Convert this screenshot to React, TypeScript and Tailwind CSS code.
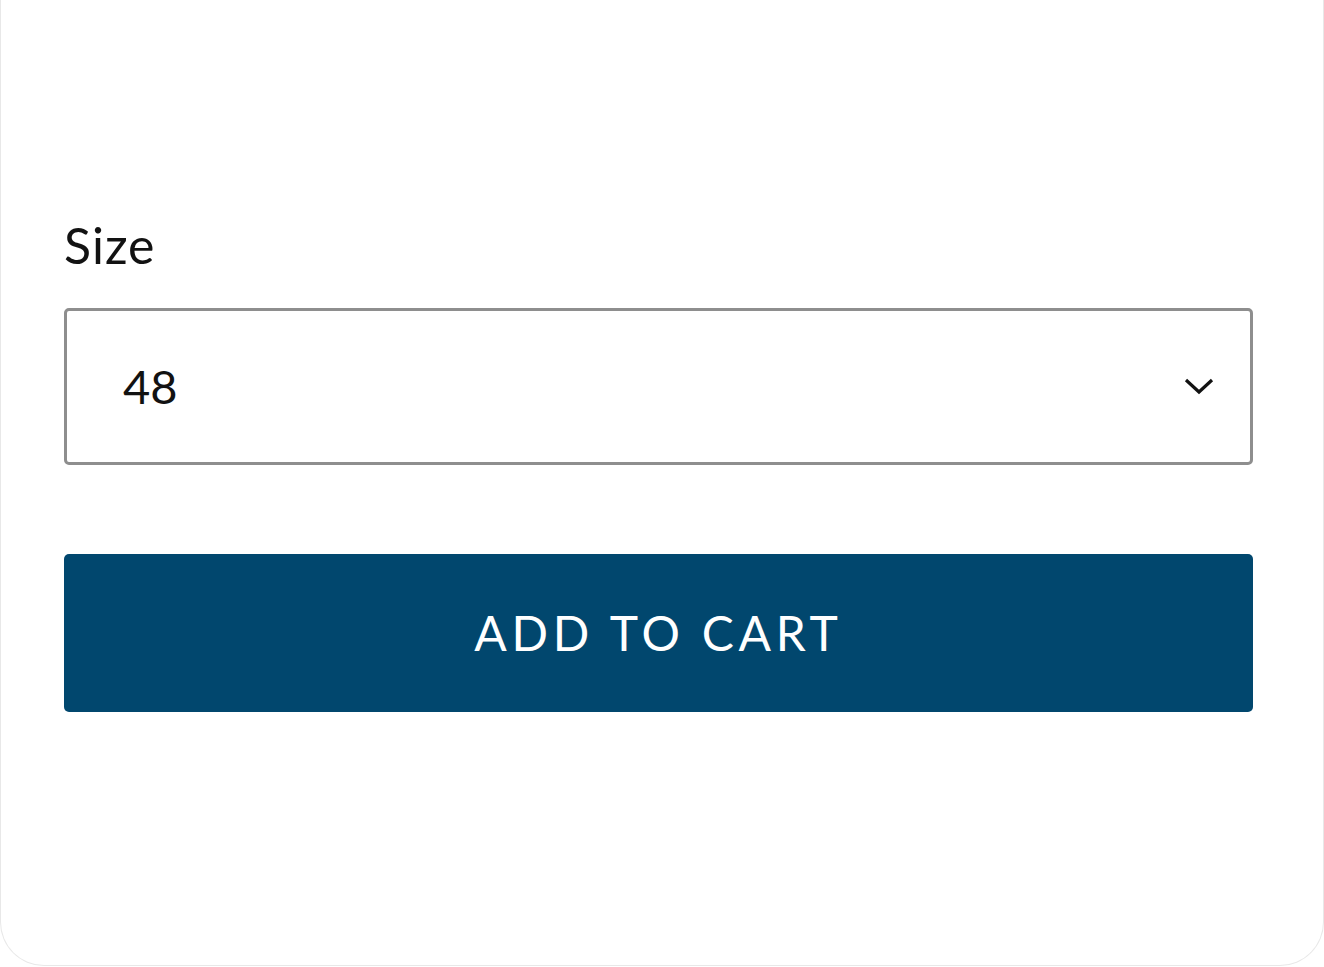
import * as React from 'react';

function Chevron() {
    return (
        <svg width="32" height="22" viewBox="0 0 32 22" fill="none" aria-hidden="true">
            <path d="M3 5 L16 17 L29 5" stroke="#121212" strokeWidth="3.2" />
        </svg>
    );
}

export default function App() {
    const [size, setSize] = React.useState('48');

    return (
        <div className="h-[967px] w-[1324px] bg-white font-['Lato',sans-serif] text-[#121212]">
            <div className="h-[966px] w-full rounded-b-[44px] border-x border-b border-[#e8e8e8] px-[63px] pt-[220px]">
                <label className="block text-[50px] leading-[50px] tracking-[0.02em]" htmlFor="size">
                    Size
                </label>

                <div className="relative mt-[38px] w-[1189px]">
                    <select
                        id="size"
                        value={size}
                        onChange={(e) => setSize(e.target.value)}
                        className="h-[157px] w-full appearance-none rounded-[5px] border-[3px] border-[#8e8e8e] bg-white pl-[56px] text-[47px] outline-none"
                    >
                        {['44', '46', '48', '50', '52', '54'].map((s) => (
                            <option key={s} value={s}>
                                {s}
                            </option>
                        ))}
                    </select>
                    <span className="pointer-events-none absolute right-[38px] top-[78px] -translate-y-1/2">
                        <Chevron />
                    </span>
                </div>

                <button
                    type="button"
                    className="mt-[89px] flex h-[158px] w-[1189px] items-center justify-center rounded-[5px] bg-[#01476e] text-[48px] tracking-[0.1em] text-white"
                >
                    ADD TO CART
                </button>
            </div>
        </div>
    );
}
